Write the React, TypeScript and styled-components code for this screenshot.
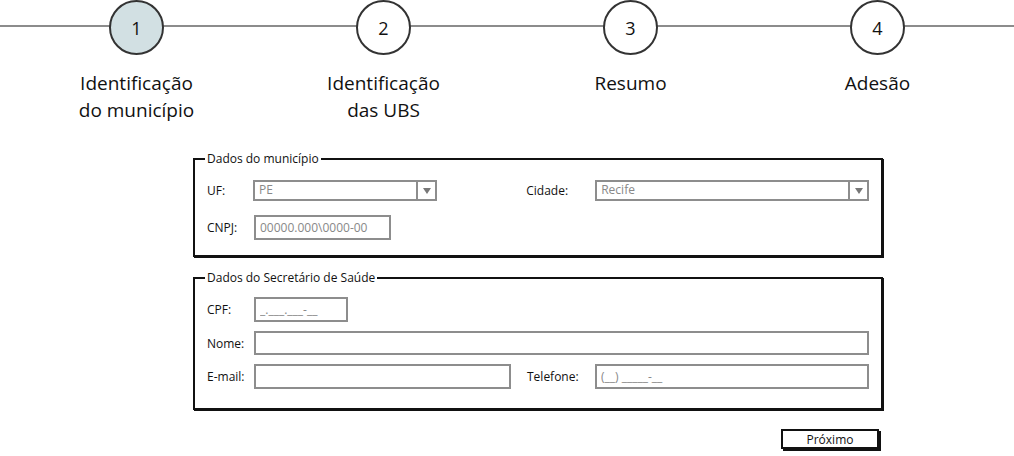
import { createGlobalStyle } from "styled-components";
import styled from "styled-components";

const GlobalStyle = createGlobalStyle`
  body {
    margin: 0;
    background: #fff;
    color: #111;
    font-family: "Open Sans", "Liberation Sans", sans-serif;
  }
`;

const Page = styled.div`
  width: 1014px;
  height: 456px;
  overflow: hidden;
`;

const Stepper = styled.ol`
  list-style: none;
  margin: 0;
  padding: 0 0 0 13px;
  display: grid;
  grid-template-columns: repeat(4, 247px);
  background: linear-gradient(#8c8c8c, #8c8c8c) no-repeat 0 25px / 100% 2px;
`;

const Step = styled.li`
  display: flex;
  flex-direction: column;
  align-items: center;
`;

const Circle = styled.div<{ $active?: boolean }>`
  width: 55px;
  height: 55px;
  box-sizing: border-box;
  border: 2px solid #333;
  border-radius: 50%;
  background: ${(p) => (p.$active ? "#d2e0e3" : "#fff")};
  display: flex;
  align-items: center;
  justify-content: center;
  font-size: 18px;
`;

const StepLabel = styled.div`
  margin-top: 15px;
  font-size: 19px;
  line-height: 27px;
  text-align: center;
`;

const Form = styled.form`
  width: 690px;
  margin: 28px 0 0 193px;
`;

const Group = styled.fieldset<{ $bottom: number }>`
  margin: 0 0 14px;
  padding: 0 12px ${(p) => p.$bottom}px 12px;
  border: 2px solid #111;
  box-shadow: 1px 1px 0 #111;
  min-width: 0;
`;

const Legend = styled.legend`
  font-size: 12px;
  line-height: 14px;
  padding: 0 2px;
  margin-left: -2px;
`;

const Rows = styled.div<{ $top: number; $gap: number }>`
  display: flex;
  flex-direction: column;
  gap: ${(p) => p.$gap}px;
  padding-top: ${(p) => p.$top}px;
`;

const Row = styled.div`
  display: flex;
  align-items: center;
`;

const Label = styled.label<{ $w: number; $ml?: number }>`
  width: ${(p) => p.$w}px;
  margin-left: ${(p) => p.$ml ?? 0}px;
  font-size: 12px;
  flex-shrink: 0;
`;

const Field = styled.input<{ $w?: number; $h: number }>`
  box-sizing: border-box;
  width: ${(p) => (p.$w ? `${p.$w}px` : "auto")};
  flex: ${(p) => (p.$w ? "0 0 auto" : "1")};
  height: ${(p) => p.$h}px;
  border: 2px solid #8d8d8d;
  border-radius: 0;
  padding: 0 4px;
  margin: 0;
  font: 12px "Open Sans", "Liberation Sans", sans-serif;
  color: #888;
  background: #fff;
  outline: none;

  &::placeholder {
    color: #888;
  }
`;

const SelectBox = styled.div<{ $w: number }>`
  box-sizing: border-box;
  width: ${(p) => p.$w}px;
  height: 21px;
  border: 2px solid #8d8d8d;
  display: flex;
  font-size: 12px;
  color: #888;
`;

const SelectValue = styled.span`
  flex: 1;
  padding: 0 4px;
  line-height: 16px;
`;

const SelectArrow = styled.span`
  width: 17px;
  border-left: 2px solid #8d8d8d;
  display: flex;
  align-items: center;
  justify-content: center;

  &::after {
    content: "";
    border-left: 4px solid transparent;
    border-right: 4px solid transparent;
    border-top: 6px solid #777;
  }
`;

const Actions = styled.div`
  display: flex;
  justify-content: flex-end;
  padding: 5px 4px 0 0;
`;

const NextButton = styled.button`
  width: 98px;
  height: 20px;
  box-sizing: border-box;
  border: 2px solid #111;
  box-shadow: 2px 2px 0 #111;
  background: #fff;
  padding: 0;
  font: 12px "Open Sans", "Liberation Sans", sans-serif;
  color: #111;
`;

const steps = [
  { n: 1, label: ["Identificação", "do município"] },
  { n: 2, label: ["Identificação", "das UBS"] },
  { n: 3, label: ["Resumo"] },
  { n: 4, label: ["Adesão"] },
];

const Select = ({ value, width }: { value: string; width: number }) => (
  <SelectBox $w={width}>
    <SelectValue>{value}</SelectValue>
    <SelectArrow />
  </SelectBox>
);

const App = () => (
  <Page>
    <GlobalStyle />
    <Stepper>
      {steps.map((s) => (
        <Step key={s.n}>
          <Circle $active={s.n === 1}>{s.n}</Circle>
          <StepLabel>
            {s.label.map((line) => (
              <div key={line}>{line}</div>
            ))}
          </StepLabel>
        </Step>
      ))}
    </Stepper>

    <Form onSubmit={(e) => e.preventDefault()}>
      <Group $bottom={15}>
        <Legend>Dados do município</Legend>
        <Rows $top={14} $gap={14}>
          <Row>
            <Label $w={46}>UF:</Label>
            <Select value="PE" width={185} />
            <Label $w={69} $ml={89}>
              Cidade:
            </Label>
            <Select value="Recife" width={275} />
          </Row>
          <Row>
            <Label $w={47}>CNPJ:</Label>
            <Field $w={137} $h={25} placeholder="00000.000\0000-00" />
          </Row>
        </Rows>
      </Group>

      <Group $bottom={19}>
        <Legend>Dados do Secretário de Saúde</Legend>
        <Rows $top={12} $gap={9}>
          <Row>
            <Label $w={47}>CPF:</Label>
            <Field $w={94} $h={25} placeholder="_.___.___-__" />
          </Row>
          <Row>
            <Label $w={47}>Nome:</Label>
            <Field $h={24} />
          </Row>
          <Row>
            <Label $w={47}>E-mail:</Label>
            <Field $w={257} $h={25} />
            <Label $w={68} $ml={16}>
              Telefone:
            </Label>
            <Field $h={25} placeholder="(__) _____-__" />
          </Row>
        </Rows>
      </Group>

      <Actions>
        <NextButton type="submit">Próximo</NextButton>
      </Actions>
    </Form>
  </Page>
);

export default App;
